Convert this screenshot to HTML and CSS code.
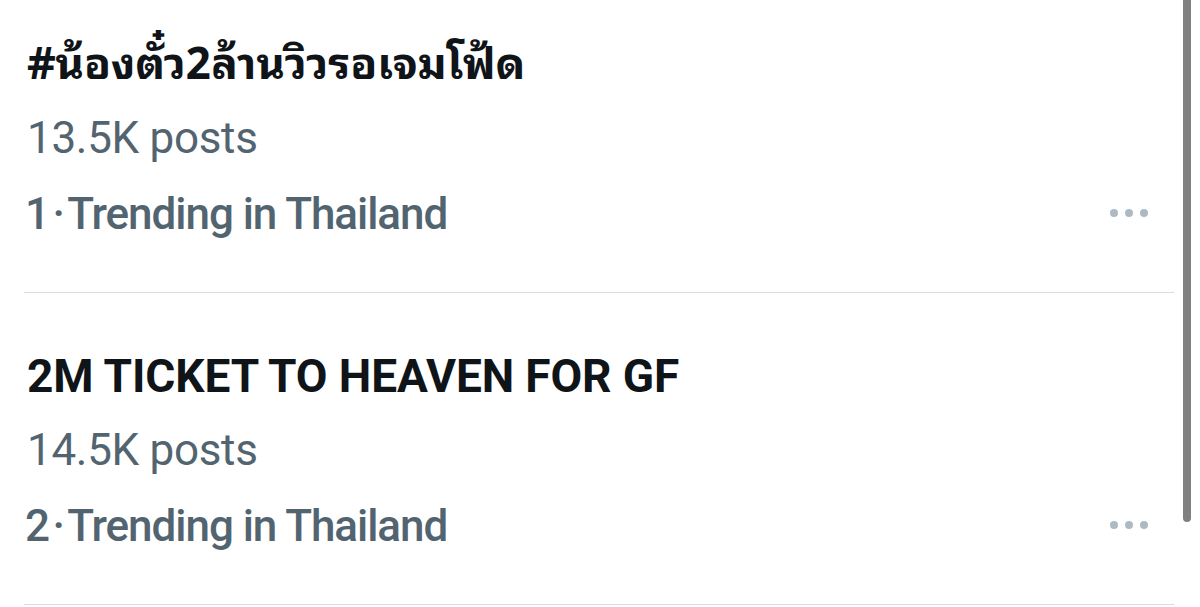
FILE: index.html
```html
<!DOCTYPE html>
<html lang="th">
<head>
<meta charset="utf-8">
<link rel="stylesheet" href="styles.css">
</head>
<body>
<div class="page">
  <ul class="trends">
    <li class="trend first">
      <div class="title thai">#น้องตั๋ว2ล้านวิวรอเจมโฟ้ด</div>
      <div class="posts">13.5K posts</div>
      <div class="meta-row">
        <div class="meta">1&#8202;·&#8202;Trending in Thailand</div>
        <div class="more"><span></span><span></span><span></span></div>
      </div>
    </li>
    <li class="trend">
      <div class="title">2M TICKET TO HEAVEN FOR GF</div>
      <div class="posts">14.5K posts</div>
      <div class="meta-row">
        <div class="meta">2&#8202;·&#8202;Trending in Thailand</div>
        <div class="more"><span></span><span></span><span></span></div>
      </div>
    </li>
  </ul>
  <div class="scrollbar"></div>
</div>
</body>
</html>
```
FILE: styles.css
```css
html, body {
  margin: 0;
  padding: 0;
  background: #ffffff;
}

body {
  font-family: Roboto, "Liberation Sans", "Noto Sans Thai Looped", "Noto Sans Thai", sans-serif;
  overflow: hidden;
}

.page {
  position: relative;
  width: 1200px;
  height: 607px;
  overflow: hidden;
}

.trends {
  list-style: none;
  margin: 0 26px 0 24px;
  padding: 0;
}

.trend {
  padding: 53px 0 40px 3px;
  border-bottom: 1px solid #d9dde0;
}

.trend.first {
  padding-top: 28px;
}

.title {
  font-size: 46px;
  line-height: 60px;
  font-weight: 700;
  color: #0f1419;
  letter-spacing: -0.1px;
  white-space: nowrap;
}

.title.thai {
  font-family: "Noto Sans Thai Looped", "Noto Sans Thai", Roboto, sans-serif;
  font-size: 44px;
  line-height: 62px;
  letter-spacing: -0.1px;
}

.posts {
  margin-top: 6px;
  font-size: 44px;
  line-height: 76px;
  font-weight: 400;
  color: #536471;
  letter-spacing: -0.3px;
}

.first .posts {
  margin-top: 10px;
}

.meta-row {
  display: flex;
  align-items: center;
  justify-content: space-between;
}

.meta {
  font-size: 44px;
  line-height: 76px;
  font-weight: 500;
  color: #536471;
  letter-spacing: -1.05px;
  margin-left: -2px;
}

.more {
  display: flex;
  gap: 7px;
  margin-right: 26px;
  margin-top: -2px;
}

.more span {
  width: 8px;
  height: 8px;
  border-radius: 50%;
  background: #aebac3;
}

.scrollbar {
  position: absolute;
  left: 1183px;
  top: -10px;
  width: 8px;
  height: 532px;
  border-radius: 0 0 4px 4px;
  background: #808080;
}
```
